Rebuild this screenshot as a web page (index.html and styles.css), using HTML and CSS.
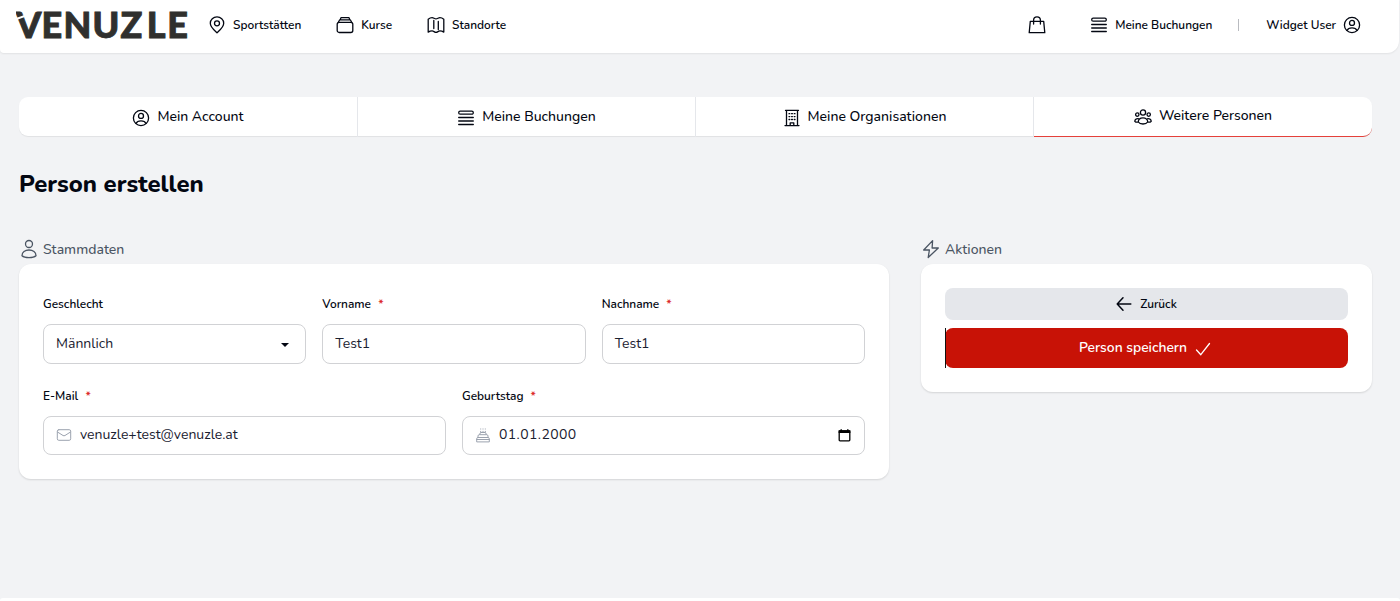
FILE: index.html
```html
<!DOCTYPE html>
<html lang="de">
<head>
    <meta charset="utf-8">
    <title>Person erstellen</title>
    <link rel="stylesheet" href="styles.css">
</head>
<body>
    <!-- shared icons -->
    <svg class="sprite" width="0" height="0">
        <symbol id="i-user-circle" viewBox="0 0 18 18">
            <circle cx="9" cy="9" r="7.6"/>
            <circle cx="9" cy="6.9" r="2.5"/>
            <path d="M4 14.500c.8-2 2.600-2.700 5-2.700s4.200.7 5 2.700"/>
        </symbol>
        <symbol id="i-list" viewBox="0 0 18 18">
            <rect x="1.700" y="2.200" width="14.600" height="3" rx="1.500"/>
            <path d="M1.700 8.500h14.600M1.700 12h14.600M1.700 15.500h14.600"/>
        </symbol>
    </svg>

    <header class="header">
        <a class="logo" href="#" aria-label="Venuzle">
            <svg width="174" height="46" viewBox="0 0 174 46">
                <text x="0 25.400 47.500 76.500 104.500 130.800 151.300" y="35.900">VENUZLE</text>
                <path class="cut" d="M-1 16.300L10 12.500v2L-1 18.500z"/>
            </svg>
        </a>
        <nav class="nav">
            <a href="#">
                <svg class="icon" viewBox="0 0 18 18"><path d="M9 16.800C6.500 14.500 2.300 11.200 2.300 7.300a6.700 6.400 0 0 1 13.400 0c0 3.900-4.200 7.200-6.700 9.500z"/><circle cx="9" cy="7.300" r="2.500"/></svg>
                <span>Sportstätten</span>
            </a>
            <a href="#">
                <svg class="icon" viewBox="0 0 18 18"><rect x="1.200" y="6.300" width="15.600" height="10.200" rx="2"/><path d="M2.200 6.500l1.500-2.700h10.600l1.500 2.700M4.200 3.800l.8-2.200h8l.8 2.200"/></svg>
                <span>Kurse</span>
            </a>
            <a href="#">
                <svg class="icon" viewBox="0 0 18 18"><path d="M1.200 3.200q2-1.600 3.900-1.600c1.400 0 2.500 1.300 3.900 1.300s2.500-1.300 3.900-1.300q2 0 3.900 1.600v12.900q-2-1.300-3.900-1.300c-1.400 0-2.500 1.600-3.900 1.600s-2.500-1.600-3.900-1.600q-1.900 0-3.900 1.300zM6.800 4.500v8M11.300 5.500v8"/></svg>
                <span>Standorte</span>
            </a>
        </nav>
        <div class="user-nav">
            <a href="#" aria-label="Warenkorb">
                <svg class="icon" viewBox="0 0 18 18"><path d="M2.300 5.400h13.400l1.100 11.300H1.200zM5.600 8V4.300a3.400 3.400 0 0 1 6.800 0V8"/></svg>
            </a>
            <a class="bookings" href="#"><svg class="icon"><use href="#i-list"/></svg><span>Meine Buchungen</span></a>
            <i class="divider"></i>
            <a href="#"><span>Widget User</span><svg class="icon"><use href="#i-user-circle"/></svg></a>
        </div>
    </header>

    <main>
        <div class="tabs">
            <a class="tab" href="#"><svg class="icon"><use href="#i-user-circle"/></svg><span>Mein Account</span></a>
            <a class="tab" href="#"><svg class="icon"><use href="#i-list"/></svg><span>Meine Buchungen</span></a>
            <a class="tab" href="#">
                <svg class="icon" viewBox="0 0 18 18"><path d="M2 16.600h14M3.500 16.600V1.400h11v15.200M2.500 1.400h13M7.200 16.500v-2.700h3.600v2.700"/><path d="M6 4.700h.8M8.600 4.700h.8M11.200 4.700h.8M6 7.600h.8M8.600 7.600h.8M11.200 7.600h.8M6 10.500h.8M8.600 10.500h.8M11.200 10.500h.8"/></svg>
                <span>Meine Organisationen</span>
            </a>
            <a class="tab active" href="#">
                <svg class="icon" viewBox="0 0 18 18"><circle cx="9" cy="4.500" r="2.600"/><circle cx="3.300" cy="6.600" r="1.700"/><circle cx="14.700" cy="6.600" r="1.700"/><path d="M4.300 14c0-2.700 2-4.200 4.700-4.200s4.700 1.500 4.700 4.200c-1 1.500-2.700 2-4.700 2s-3.700-.5-4.700-2zM4.300 10.700C2.200 10.500.9 11.600.8 13.300c.7.9 1.900 1 3.300.9M13.700 10.700c2.100-.2 3.400.9 3.500 2.600-.7.9-1.900 1-3.300.9"/></svg>
                <span>Weitere Personen</span>
            </a>
        </div>

        <h1>Person erstellen</h1>

        <div class="content">
            <section>
                <h2>
                    <svg class="icon" viewBox="0 0 18 20"><circle cx="9" cy="5" r="3.500"/><path d="M2 16.700c0-3.300 3-5.700 7-5.700s7 2.400 7 5.700c-1.500 1.400-4 1.900-7 1.900s-5.500-.5-7-1.900z"/></svg>
                    <span>Stammdaten</span>
                </h2>
                <div class="card">
                    <div class="row three">
                        <div class="field">
                            <label>Geschlecht</label>
                            <div class="input"><span>Männlich</span><i class="caret"></i></div>
                        </div>
                        <div class="field">
                            <label>Vorname <b>*</b></label>
                            <div class="input"><span>Test1</span></div>
                        </div>
                        <div class="field">
                            <label>Nachname <b>*</b></label>
                            <div class="input"><span>Test1</span></div>
                        </div>
                    </div>
                    <div class="row two">
                        <div class="field">
                            <label>E-Mail <b>*</b></label>
                            <div class="input">
                                <svg class="hint" viewBox="0 0 16 16"><rect x="1.300" y="2.700" width="13.400" height="10.600" rx="1.500"/><path d="M1.500 5l5.500 3.500q1 .6 2 0L14.500 5"/></svg>
                                <span>venuzle+test@venuzle.at</span>
                            </div>
                        </div>
                        <div class="field">
                            <label>Geburtstag <b>*</b></label>
                            <div class="input">
                                <svg class="hint" viewBox="0 0 16 16"><path d="M1.700 14.500v-2.700q0-1.300 1.300-1.300h10q1.300 0 1.300 1.300v2.700zM3 10.300V9q0-1.300 1.300-1.300h7.400Q13 7.700 13 9v1.300M4.700 7.500q0-2 1.300-2h4q1.300 0 1.300 2M1.700 12.500h12.600"/><path d="M5.700 4.300v.8M8 4.300v.8M10.300 4.300v.8M5.700 1.900v.2M8 1.900v.2M10.300 1.900v.2"/></svg>
                                <span class="date">01.01.2000</span>
                                <svg class="calendar" viewBox="0 0 13 13"><rect x="1.200" y="1.900" width="10.600" height="9.900" rx=".8"/><path class="solid" d="M.6 1.300h11.800V4H.6zM2.500.3h1.400v1.500H2.500zM9.100.3h1.400v1.500H9.100z"/></svg>
                            </div>
                        </div>
                    </div>
                </div>
            </section>

            <section>
                <h2>
                    <svg class="icon" viewBox="0 0 18 20"><path d="M10.600 1.600L1.700 11h5.700l-1.200 7.500L16.300 9h-6.200z"/></svg>
                    <span>Aktionen</span>
                </h2>
                <div class="card actions">
                    <a class="btn back" href="#">
                        <svg viewBox="0 0 16 16"><path d="M7 1.800L1.200 8 7 14.200M1.200 8h13.600"/></svg>
                        <span>Zurück</span>
                    </a>
                    <a class="btn save" href="#">
                        <span>Person speichern</span>
                        <svg viewBox="0 0 16 16"><path d="M1.500 10l4.300 4.700L14.500 3.500"/></svg>
                    </a>
                </div>
            </section>
        </div>
    </main>

    <footer class="footer"></footer>
</body>
</html>
```

FILE: styles.css
```css
* {
    box-sizing: border-box;
}

body {
    margin: 0;
    height: 601px;
    overflow: hidden;
    display: flex;
    flex-direction: column;
    background-color: #f2f3f5;
    color: #030712;
    font-family: Nunito, Lato, sans-serif;
    font-size: 14px;
}

a {
    color: inherit;
    text-decoration: none;
}

svg {
    flex: none;
    fill: none;
    stroke: currentColor;
    stroke-width: 1.3;
    stroke-linecap: round;
    stroke-linejoin: round;
}

.sprite {
    position: absolute;
}

.icon {
    width: 18px;
    height: 18px;
}

/* header */
.header {
    display: flex;
    align-items: center;
    width: 1399px;
    height: 53px;
    padding: 0 38px 3px 16px;
    background-color: #fff;
    border-radius: 0 0 12px 4px;
    box-shadow: 0 1px 2px rgba(0, 0, 0, 0.07);
    font-size: 11.900px;
    line-height: 18px;
    font-weight: 600;
}

.header a {
    display: flex;
    align-items: center;
    gap: 7px;
}

.logo svg {
    display: block;
    stroke: none;
}

.logo text {
    fill: #30302e;
    stroke: #30302e;
    stroke-width: 0.9px;
    stroke-linejoin: miter;
    font-family: Lato, sans-serif;
    font-size: 36px;
    font-weight: 900;
}

.logo .cut {
    fill: #fff;
}

.nav {
    display: flex;
    gap: 35px;
    margin-left: 18px;
}

.user-nav {
    display: flex;
    align-items: center;
    margin-left: auto;
}

.bookings {
    margin-left: 44px;
}

.divider {
    width: 1px;
    height: 12px;
    margin: 0 27px 0 26px;
    background-color: #b9bbc0;
}

/* tabs */
main {
    flex: 1;
    padding: 44px 28px 0 19px;
}

.tabs {
    display: grid;
    grid-template-columns: 339px 338px 338px 1fr;
    height: 39px;
    background-color: #fff;
    border-radius: 9px;
    box-shadow: 0 1px 1px rgba(0, 0, 0, 0.07);
}

.tab {
    display: flex;
    align-items: center;
    justify-content: center;
    gap: 7px;
    border-right: 1px solid #e5e7eb;
    line-height: 18px;
    font-weight: 500;
}

.tab .icon {
    margin-top: 1px;
}

.tab span {
    margin-top: -1px;
}

.tab.active {
    height: 40px;
    border-right: 0;
    border-bottom: 1px solid #e5403a;
    border-radius: 0 9px 9px 0;
}

h1 {
    margin: 34px 0 0;
    font-size: 23.850px;
    line-height: 28px;
    font-weight: 800;
}

/* form */
.content {
    display: grid;
    grid-template-columns: 870px 1fr;
    gap: 32px;
    margin-top: 39px;
}

h2 {
    display: flex;
    align-items: center;
    gap: 5px;
    height: 24px;
    margin: 0 0 3px;
    padding: 0 0 0 1px;
    color: #4b5563;
    font-size: 14px;
    font-weight: 500;
}

h2 .icon {
    height: 20px;
}

.card {
    padding: 24px;
    background-color: #fff;
    border-radius: 12px;
    box-shadow: 0 1px 2px rgba(0, 0, 0, 0.13);
}

.row {
    display: grid;
    gap: 16px;
}

.three {
    grid-template-columns: repeat(3, 1fr);
}

.two {
    grid-template-columns: repeat(2, 1fr);
    margin-top: 16px;
}

label {
    display: block;
    height: 36px;
    line-height: 33.500px;
    font-size: 11.900px;
    font-weight: 600;
}

label b {
    margin-left: 4px;
    color: #dc2626;
    font-weight: 600;
}

.input {
    display: flex;
    align-items: center;
    height: 39.500px;
    padding: 0 13px 0 12px;
    border: 1px solid #d1d2d5;
    border-radius: 8px;
    color: #1a2130;
    line-height: 20px;
}

.hint {
    width: 16px;
    height: 16px;
    margin-right: 8px;
    color: #9ca3af;
    stroke-width: 1;
}

.date {
    letter-spacing: 0.400px;
}

.caret {
    margin: 2px 3px 0 auto;
    border: 4px solid transparent;
    border-top-color: #030712;
    border-bottom: 0;
}

.calendar {
    width: 13px;
    height: 13px;
    margin-left: auto;
    color: #000;
}

.calendar .solid {
    fill: #000;
    stroke: none;
}

/* actions */
.actions {
    display: flex;
    flex-direction: column;
    gap: 8px;
}

.btn {
    display: flex;
    align-items: center;
    justify-content: center;
    gap: 8px;
    border-radius: 8px;
    font-weight: 600;
}

.btn svg {
    width: 16px;
    height: 16px;
}

.back {
    height: 32px;
    background-color: #e5e7eb;
    font-size: 11.900px;
}

.back svg {
    stroke-width: 1.500;
}

.save {
    position: relative;
    height: 39.500px;
    padding-right: 3px;
    background-color: #c81206;
    color: #fff;
    font-size: 13.850px;
}

/* dark edge on the left of the primary button */
.save::before {
    content: "";
    position: absolute;
    left: 0;
    top: 0;
    width: 1px;
    height: 100%;
    background-color: #111;
}

.footer {
    height: 3px;
    background-color: #fff;
    border-radius: 6px 6px 0 0;
}
```
